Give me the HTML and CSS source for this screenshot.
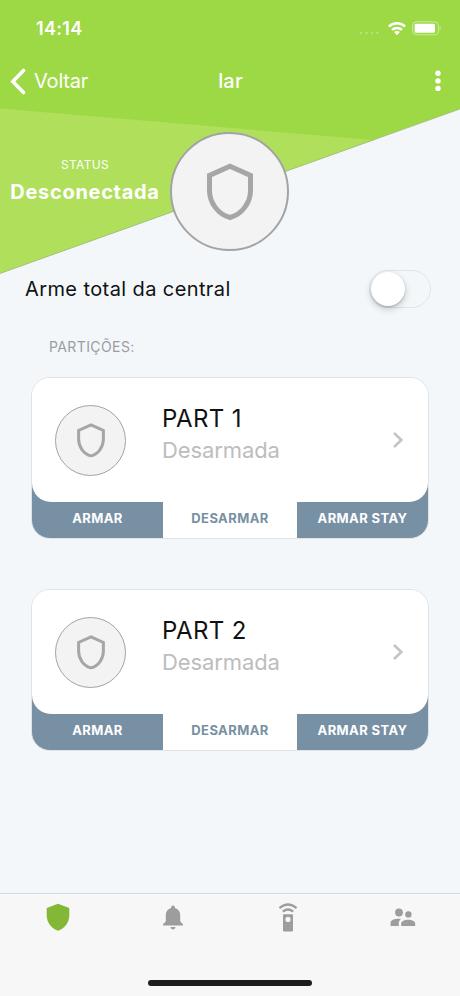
FILE: index.html
```html
<!DOCTYPE html>
<html lang="pt-BR">
<head>
<meta charset="utf-8">
<meta name="viewport" content="width=device-width, initial-scale=1">
<title>lar</title>
<link rel="stylesheet" href="styles.css">
</head>
<body>
<svg class="defs" width="0" height="0">
  <symbol id="shield-outline" viewBox="0 0 48 58">
    <path d="M24 3.2 L44.5 12.4 V27.5 C44.5 39.5 36 51.5 24 54.5 C12 51.5 3.5 39.5 3.5 27.5 V12.4 Z" fill="none" stroke="currentColor" stroke-width="5"/>
  </symbol>
  <symbol id="chevron" viewBox="0 0 12 18">
    <path d="M2 2 L9.3 9 L2 16" fill="none" stroke="currentColor" stroke-width="2.6"/>
  </symbol>
</svg>

<div class="screen">
  <header class="header">
    <svg class="header-bg" viewBox="0 0 460 274">
      <path d="M0 0 H460 V109 L0 273.5 Z" fill="#9dd944"/>
      <path d="M0 108.5 L374 140 L0 273.5 Z" fill="#b0df5c"/>
      <path d="M460 109 L0 273.5" stroke="#9fb08a" stroke-width=".8" opacity=".8"/>
    </svg>

    <div class="statusbar">
      <span class="time">14:14</span>
      <div class="indicators">
        <svg class="signal" width="21" height="4" viewBox="0 0 21 4"><g fill="#b9e37a"><circle cx="2" cy="2" r="1.2"/><circle cx="7.5" cy="2" r="1.2"/><circle cx="13" cy="2" r="1.2"/><circle cx="18.5" cy="2" r="1.2"/></g></svg>
        <svg class="wifi" width="20" height="15" viewBox="0 0 20 15">
          <path d="M1.9 5.6 A11.4 11.4 0 0 1 18.1 5.6" fill="none" stroke="#fff" stroke-width="2.6"/>
          <path d="M5 9 A7 7 0 0 1 15 9" fill="none" stroke="#fff" stroke-width="2.5"/>
          <path d="M7.1 11 Q10 8.6 12.9 11 L10 14.2 Z" fill="#fff"/>
        </svg>
        <svg class="battery" width="30" height="15" viewBox="0 0 30 15">
          <rect x=".6" y=".8" width="25.8" height="13" rx="3.6" fill="none" stroke="#cdeca0" stroke-width="1"/>
          <rect x="2.6" y="2.8" width="20.4" height="9" rx="1.4" fill="#fff"/>
          <path d="M27.6 5 Q30 7.3 27.6 9.6 Z" fill="#cdeca0"/>
        </svg>
      </div>
    </div>

    <nav class="navbar">
      <a class="back">
        <svg width="16" height="27" viewBox="0 0 16 27"><path d="M13.5 2.5 L2.8 13.5 L13.5 24.5" fill="none" stroke="#fff" stroke-width="3.6" stroke-linecap="round" stroke-linejoin="miter"/></svg>
        <span>Voltar</span>
      </a>
      <h1 class="title">lar</h1>
      <svg class="more" width="6" height="22" viewBox="0 0 6 22"><g fill="#fff"><circle cx="3" cy="3.3" r="2.7"/><circle cx="3" cy="10.9" r="2.7"/><circle cx="3" cy="18.4" r="2.7"/></g></svg>
    </nav>

    <div class="hero">
      <div class="status">
        <span class="status-label">STATUS</span>
        <strong class="status-value">Desconectada</strong>
      </div>
      <div class="shield-big"><svg width="48" height="58"><use href="#shield-outline"/></svg></div>
    </div>
  </header>

  <main class="main">
    <div class="arm-row">
      <span class="arm-label">Arme total da central</span>
      <div class="toggle"><div class="knob"></div></div>
    </div>
    <h2 class="section">PARTIÇÕES:</h2>

    <section class="card">
      <div class="card-body">
        <div class="shield-small"><svg width="30" height="35"><use href="#shield-outline"/></svg></div>
        <div class="info">
          <div class="name">PART 1</div>
          <div class="state">Desarmada</div>
        </div>
        <svg class="chevron" width="12" height="18"><use href="#chevron"/></svg>
      </div>
      <div class="actions">
        <div class="btn">ARMAR</div>
        <div class="btn active">DESARMAR</div>
        <div class="btn">ARMAR STAY</div>
      </div>
    </section>

    <section class="card">
      <div class="card-body">
        <div class="shield-small"><svg width="30" height="35"><use href="#shield-outline"/></svg></div>
        <div class="info">
          <div class="name">PART 2</div>
          <div class="state">Desarmada</div>
        </div>
        <svg class="chevron" width="12" height="18"><use href="#chevron"/></svg>
      </div>
      <div class="actions">
        <div class="btn">ARMAR</div>
        <div class="btn active">DESARMAR</div>
        <div class="btn">ARMAR STAY</div>
      </div>
    </section>
  </main>

  <footer class="tabbar">
    <div class="tabs">
      <div class="tab selected">
        <svg width="24" height="28" viewBox="0 0 24 28"><path d="M12 .8 L22.6 4.7 Q23.3 5 23.3 5.8 V12.5 C23.3 19.5 18.5 25.5 12 27.8 C5.5 25.5 .7 19.5 .7 12.5 V5.8 Q.7 5 1.4 4.7 Z" fill="currentColor"/></svg>
      </div>
      <div class="tab">
        <svg width="20" height="25" viewBox="0 0 20 25"><path d="M10 .4 C11.1 .4 11.9 1.2 11.9 2.3 V3 C15.2 3.9 17.2 6.6 17.2 10 V16.4 L20 19.3 V20.6 H0 V19.3 L2.8 16.4 V10 C2.8 6.6 4.8 3.9 8.1 3 V2.3 C8.1 1.2 8.9 .4 10 .4 Z M7.6 21.9 H12.4 C12.4 23.3 11.3 24.4 10 24.4 C8.7 24.4 7.6 23.3 7.6 21.9 Z" fill="currentColor"/></svg>
      </div>
      <div class="tab">
        <svg width="20" height="29" viewBox="0 0 20 29">
          <path d="M1.4 5.2 Q10 -2.2 18.6 5.2" fill="none" stroke="currentColor" stroke-width="2.2"/>
          <path d="M4.8 8.6 Q10 4.4 15.2 8.6" fill="none" stroke="currentColor" stroke-width="2.2"/>
          <path d="M6 11.2 H14 Q15 11.2 15 12.2 V27.6 Q15 28.6 14 28.6 H6 Q5 28.6 5 27.6 V12.2 Q5 11.2 6 11.2 Z M10 13.8 A2.6 2.6 0 1 0 10 19 A2.6 2.6 0 1 0 10 13.8 Z" fill="currentColor" fill-rule="evenodd"/>
        </svg>
      </div>
      <div class="tab">
        <svg width="26" height="19" viewBox="0 0 26 19"><g fill="currentColor"><circle cx="9" cy="4.5" r="3.9"/><circle cx="18.4" cy="6.4" r="3.2"/><path d="M.6 18 V14.8 C.6 11.8 6 10.3 11 11 C9.4 12.2 8.8 13.6 8.8 15.2 V18 Z"/><path d="M11.2 18 V15.6 C11.2 13 15 11.8 18.2 11.8 C21.5 11.8 25.2 13 25.2 15.6 V18 Z"/></g></svg>
      </div>
    </div>
    <div class="home-indicator"></div>
  </footer>
</div>
</body>
</html>
```
FILE: styles.css
```css
* {box-sizing: border-box;}
body {margin: 0;font-family: Inter, "Liberation Sans", sans-serif;background: #f3f7fa;color: #111;}
svg {display: block;flex: none;}
.defs {position: absolute;}
.screen {width: 460px;height: 996px;display: flex;flex-direction: column;overflow: hidden;white-space: nowrap;}

.header {position: relative;height: 274px;color: #fff;}
.header-bg {position: absolute;top: 0;left: 0;width: 460px;height: 274px;z-index: -1;}
.statusbar {height: 56px;padding: 0 18px 0 36px;display: flex;align-items: center;justify-content: space-between;}
.time {font-size: 18px;font-weight: 600;letter-spacing: 0.3px;}
.indicators {display: flex;align-items: center;}
.signal {margin: 10px 7px 0 0;}
.wifi {margin-right: 5px;}

.navbar {height: 50px;padding: 0 19px 0 10px;display: grid;grid-template-columns: 1fr auto 1fr;align-items: center;}
.back {display: flex;align-items: center;gap: 8px;font-size: 20px;letter-spacing: -0.2px;}
.title {margin: 0 0 0 10px;font-size: 20px;font-weight: 500;line-height: 24px;letter-spacing: 0.2px;}
.more {justify-self: end;}

.hero {height: 168px;padding: 26px 0 0;display: flex;align-items: flex-start;}
.status {width: 170px;padding-top: 25px;display: flex;flex-direction: column;align-items: center;}
.status-label {font-size: 12px;line-height: 16px;letter-spacing: 0.3px;}
.status-value {font-size: 20px;line-height: 24px;margin-top: 7px;font-weight: 700;letter-spacing: 0.7px;}
.shield-big {width: 119px;height: 119px;border: 2px solid #a3a3a3;border-radius: 50%;background: #f3f3f3;color: #a6a6a6;display: flex;align-items: center;justify-content: center;}

.main {flex: 1;}
.arm-row {height: 30px;margin: 0 29px 0 25px;display: flex;align-items: center;justify-content: space-between;}
.arm-label {font-size: 20px;letter-spacing: 0.4px;}
.toggle {width: 62px;height: 38px;border: 1px solid #e2e5e7;border-radius: 19px;padding: 1px;}
.knob {width: 34px;height: 34px;border-radius: 50%;background: #fff;box-shadow: 0 3px 7px rgba(0,0,0,.2), 0 1px 2px rgba(0,0,0,.2);}
.section {margin: 33px 0 0 49px;font-size: 14px;line-height: 20px;font-weight: 400;letter-spacing: 0.4px;color: #999da1;}

.card {width: 398px;height: 162px;margin: 20px auto 50px 31px;border: 1px solid #dfe3e6;border-radius: 19px;background: linear-gradient(#fff 50%, #7890a3 50%);overflow: hidden;}
.card + .card {margin-top: 0;}
.card-body {height: 124px;padding: 0 24px 0 23px;border-radius: 0 0 19px 19px;background: #fff;display: flex;align-items: center;}
.shield-small {width: 71px;height: 71px;border: 1.5px solid #a3a3a3;border-radius: 50%;background: #f3f3f3;color: #a6a6a6;display: flex;align-items: center;justify-content: center;}
.info {flex: 1;margin: -11px 0 0 36px;}
.name {font-size: 24px;line-height: 32px;letter-spacing: 0.4px;}
.state {font-size: 22px;line-height: 31px;color: #bdbdbd;letter-spacing: -0.1px;}
.chevron {color: #c4c4c4;}
.actions {height: 36px;display: grid;grid-template-columns: 131px 134px 131px;}
.btn {display: flex;align-items: center;justify-content: center;padding-bottom: 5px;font-size: 13px;font-weight: 700;letter-spacing: 0.4px;color: #fff;}
.btn.active {background: #fff;color: #7890a3;}

.tabbar {height: 103px;border-top: 1px solid #d3dbe1;background: #f7f7f7;display: flex;flex-direction: column;justify-content: space-between;align-items: center;}
.tabs {width: 460px;height: 46px;display: grid;grid-template-columns: repeat(4, 1fr);}
.tab {display: flex;align-items: center;justify-content: center;color: #9d9d9d;}
.tab.selected {color: #83b735;}
.home-indicator {width: 164px;height: 6px;margin-bottom: 10px;border-radius: 3px;background: #1d1d1d;}
```
